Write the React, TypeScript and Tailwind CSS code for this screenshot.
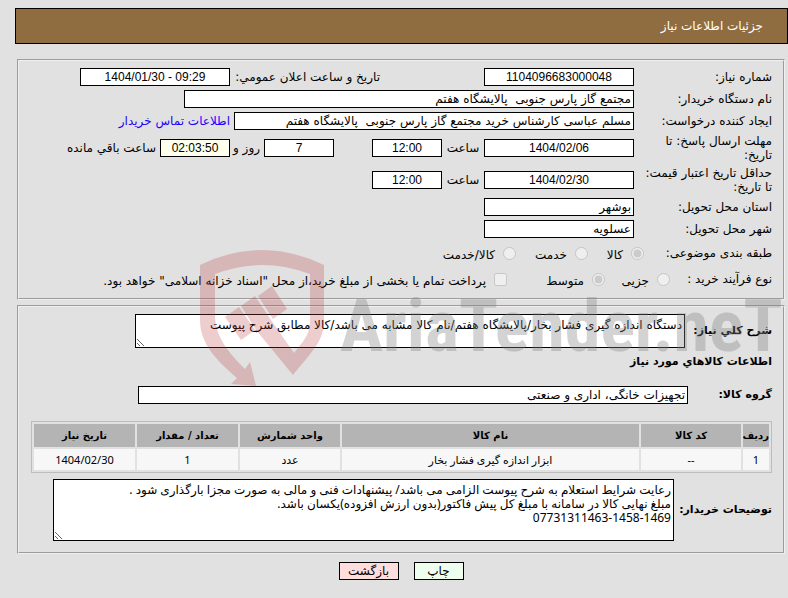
import type { ReactNode } from "react";

type FieldProps = {
  id: string;
  value: string;
  className: string;
  numeric?: boolean;
};

type ChoiceProps = {
  id: string;
  type: "radio" | "checkbox";
  name: string;
  text: string;
  className?: string;
  checked?: boolean;
};

const columns = [
  { title: "ردیف", value: "1", className: "w-[26px]" },
  { title: "کد کالا", value: "--", className: "w-[100px]" },
  { title: "نام کالا", value: "ابزار اندازه گیری فشار بخار", className: "" },
  { title: "واحد شمارش", value: "عدد", className: "w-[100px]" },
  { title: "تعداد / مقدار", value: "1", className: "w-[101px]" },
  { title: "تاریخ نیاز", value: "1404/02/30", className: "w-[101px]" },
];

const buyerNotes = [
  "رعایت شرایط استعلام به شرح پیوست الزامی می باشد/ پیشنهادات فنی و مالی به صورت مجزا بارگذاری شود .",
  "مبلغ نهایی کالا در سامانه با مبلغ کل پیش فاکتور(بدون ارزش افزوده)یکسان باشد.",
  "07731311463-1458-1469",
].join("\n");

export default function App() {
  return (
    <div
      dir="rtl"
      lang="fa"
      className='relative min-h-screen overflow-hidden bg-[#e1e1e1] pt-2 pb-4 text-[12px] leading-[14px] text-black font-["DejaVu_Sans",sans-serif]'
    >
      <header className="ml-[15px] flex h-9 items-center border border-black bg-[#906d40] pr-6">
        <h1 className="text-white">جزئیات اطلاعات نیاز</h1>
      </header>

      <main className="mr-[3px] ml-[17px]">
        <section className="mt-[15px] border-2 border-[#f0f0f0] pt-[5px] pr-[11px] pb-1.5 [border-style:groove]">
          <Row>
            <RowLabel htmlFor="need-number">شماره نیاز:</RowLabel>
            <Field id="need-number" value="1104096683000048" numeric className="w-[150px]" />
            <label htmlFor="announce-date" className="mr-[104px] w-[150px] whitespace-nowrap">
              تاریخ و ساعت اعلان عمومي:
            </label>
            <Field id="announce-date" value="1404/01/30 - 09:29" numeric className="w-[150px]" />
          </Row>
          <Row>
            <RowLabel htmlFor="buyer">نام دستگاه خریدار:</RowLabel>
            <Field id="buyer" value="مجتمع گاز پارس جنوبی  پالایشگاه هفتم" className="w-[450px]" />
          </Row>
          <Row>
            <RowLabel htmlFor="creator">ایجاد کننده درخواست:</RowLabel>
            <Field
              id="creator"
              value="مسلم عباسی کارشناس خرید مجتمع گاز پارس جنوبی  پالایشگاه هفتم"
              className="w-[400px]"
            />
            <a href="#contact" className="mr-1 text-[#2200ff]">
              اطلاعات تماس خریدار
            </a>
          </Row>
          <Row tall>
            <RowLabel htmlFor="reply-date">
              مهلت ارسال پاسخ: تا
              <br />
              تاریخ:
            </RowLabel>
            <Field id="reply-date" value="1404/02/06" numeric className="w-[150px]" />
            <label htmlFor="reply-time" className="w-[42px] text-center">
              ساعت
            </label>
            <Field id="reply-time" value="12:00" numeric className="w-[70px]" />
            <Field id="days-left" value="7" numeric className="mr-[38px] w-[70px]" />
            <label htmlFor="days-left" className="w-[34px] pr-1">
              روز و
            </label>
            <Field id="time-left" value="02:03:50" numeric className="w-[70px] bg-[#ffffee]" />
            <label htmlFor="time-left" className="mr-1">
              ساعت باقي مانده
            </label>
          </Row>
          <Row tall>
            <RowLabel htmlFor="price-date">
              حداقل تاریخ اعتبار قیمت:
              <br />
              تا تاریخ:
            </RowLabel>
            <Field id="price-date" value="1404/02/30" numeric className="w-[150px]" />
            <label htmlFor="price-time" className="w-[42px] text-center">
              ساعت
            </label>
            <Field id="price-time" value="12:00" numeric className="w-[70px]" />
          </Row>
          <Row>
            <RowLabel htmlFor="province">استان محل تحویل:</RowLabel>
            <Field id="province" value="بوشهر" className="w-[150px]" />
          </Row>
          <Row>
            <RowLabel htmlFor="city">شهر محل تحویل:</RowLabel>
            <Field id="city" value="عسلویه" className="w-[150px]" />
          </Row>

          <div role="group" aria-label="طبقه بندی موضوعی" className="flex h-[26px] items-center">
            <span className="w-32 shrink-0">طبقه بندی موضوعی:</span>
            <Choice id="goods" type="radio" name="subject" text="کالا" checked className="w-14" />
            <Choice id="service" type="radio" name="subject" text="خدمت" className="w-[72px]" />
            <Choice id="both" type="radio" name="subject" text="کالا/خدمت" />
          </div>
          <div role="group" aria-label="نوع فرآیند خرید" className="flex h-[26px] items-center">
            <span className="w-[102px] shrink-0">نوع فرآیند خرید :</span>
            <Choice id="minor" type="radio" name="process" text="جزیی" className="w-[65px]" />
            <Choice id="medium" type="radio" name="process" text="متوسط" checked className="w-[98px]" />
            <Choice
              id="treasury"
              type="checkbox"
              name="treasury"
              text={'پرداخت تمام یا بخشی از مبلغ خرید،از محل "اسناد خزانه اسلامی" خواهد بود.'}
            />
          </div>
        </section>

        <section className="mt-[5px] border-2 border-[#f0f0f0] pt-[7px] pr-[11px] pb-[11px] pl-3 [border-style:groove]">
          <div className="flex items-center">
            <label htmlFor="summary" className="w-[87px] shrink-0 text-[11px] font-bold whitespace-nowrap">
              شرح کلي نیاز:
            </label>
            <textarea
              id="summary"
              readOnly
              className="h-[34px] w-[550px] border border-black bg-white px-0.5 pt-[3px]"
              defaultValue="دستگاه اندازه گیری فشار بخار/پالایشگاه هفتم/نام کالا مشابه می باشد/کالا مطابق شرح پیوست"
            />
          </div>
          <h2 className="mt-[7px] text-[11px] font-bold">اطلاعات کالاهاي مورد نیاز</h2>
          <div className="mt-[17px] flex items-center">
            <label htmlFor="group" className="w-[84px] shrink-0 text-[11px] font-bold">
              گروه کالا:
            </label>
            <Field id="group" value="تجهیزات خانگی، اداری و صنعتی" className="w-[550px]" />
          </div>

          <table className="mt-[17px] w-full table-fixed border-separate border-spacing-[2px] border border-[#bdbdbd] text-center text-[11px]">
            <thead>
              <tr className="h-[23px] bg-[#b4b4b4] text-[10px]">
                {columns.map((column) => (
                  <th key={column.title} scope="col" className={`p-0 whitespace-nowrap ${column.className}`}>
                    {column.title}
                  </th>
                ))}
              </tr>
            </thead>
            <tbody>
              <tr className='h-[21px] bg-[#f7f7f7] font-["Noto_Sans","DejaVu_Sans",sans-serif]'>
                {columns.map((column) => (
                  <td key={column.title} className="p-0">
                    {column.value}
                  </td>
                ))}
              </tr>
            </tbody>
          </table>

          <div className="mt-1.5 flex items-center">
            <label htmlFor="notes" className="w-[98px] shrink-0 text-[11px] font-bold whitespace-nowrap">
              توضیحات خریدار:
            </label>
            <textarea
              id="notes"
              readOnly
              className='h-[62px] w-[621px] border border-black bg-white px-0.5 pt-[3px] font-["Noto_Sans","DejaVu_Sans",sans-serif]'
              defaultValue={buyerNotes}
            />
          </div>
        </section>

        <div className="mt-2 flex justify-center gap-[15px]">
          <button type="button" className="h-[18px] w-[50px] border border-black bg-[#eeffee]">
            چاپ
          </button>
          <button type="button" className="h-[18px] w-[60px] border border-black bg-[#ffdddd]">
            بازگشت
          </button>
        </div>
      </main>

      <Watermark />
    </div>
  );
}

function Row({ children, tall }: { children: ReactNode; tall?: boolean }) {
  return <div className={`flex items-center ${tall ? "h-8" : "h-[22px]"}`}>{children}</div>;
}

function RowLabel({ htmlFor, children }: { htmlFor: string; children: ReactNode }) {
  return (
    <label htmlFor={htmlFor} className="w-[138px] shrink-0 whitespace-nowrap">
      {children}
    </label>
  );
}

function Field({ id, value, className, numeric }: FieldProps) {
  return (
    <input
      id={id}
      type="text"
      dir={numeric ? "ltr" : "rtl"}
      readOnly
      value={value}
      className={`h-[18px] border border-black px-0.5 ${
        numeric ? 'text-center font-["Liberation_Sans",sans-serif]' : ""
      } ${className.includes("bg-") ? "" : "bg-white"} ${className}`}
    />
  );
}

function Choice({ id, type, name, text, className = "", checked }: ChoiceProps) {
  return (
    <span className={`flex shrink-0 items-center gap-2 ${className}`}>
      <input id={id} type={type} name={name} disabled defaultChecked={checked} className="h-[13px] w-[13px] shrink-0" />
      <label htmlFor={id} className="pt-1 whitespace-nowrap">
        {text}
      </label>
    </span>
  );
}

function Watermark() {
  return (
    <div
      dir="ltr"
      aria-hidden="true"
      className="pointer-events-none absolute top-[250px] left-[200px] flex items-start gap-[15px]"
    >
      <svg viewBox="0 0 125 137" className="h-[137px] w-[125px] shrink-0" fill="#b9373c" fillOpacity="0.25">
        <path d="M0 15Q62 -15 124 15V70C124 92 112 101 93 125L56 80L41 56L55 46L73 73L94 103C105 89 110 85 110 69V24Q62 6 15 24V65C15 87 29 103 45 119L50 112L56 136L31 134L37 128C15 109 0 93 0 70Z" />
        <path d="M25 67L39 57L55 80L41 90Z" />
        <path d="M58 46L72 36L87 59L73 69Z" />
      </svg>
      <span className='pt-8 text-[72px] leading-[90px] font-bold text-[#808080]/35 font-["Roboto_Condensed",sans-serif]'>
        AriaTender.neT
      </span>
    </div>
  );
}
